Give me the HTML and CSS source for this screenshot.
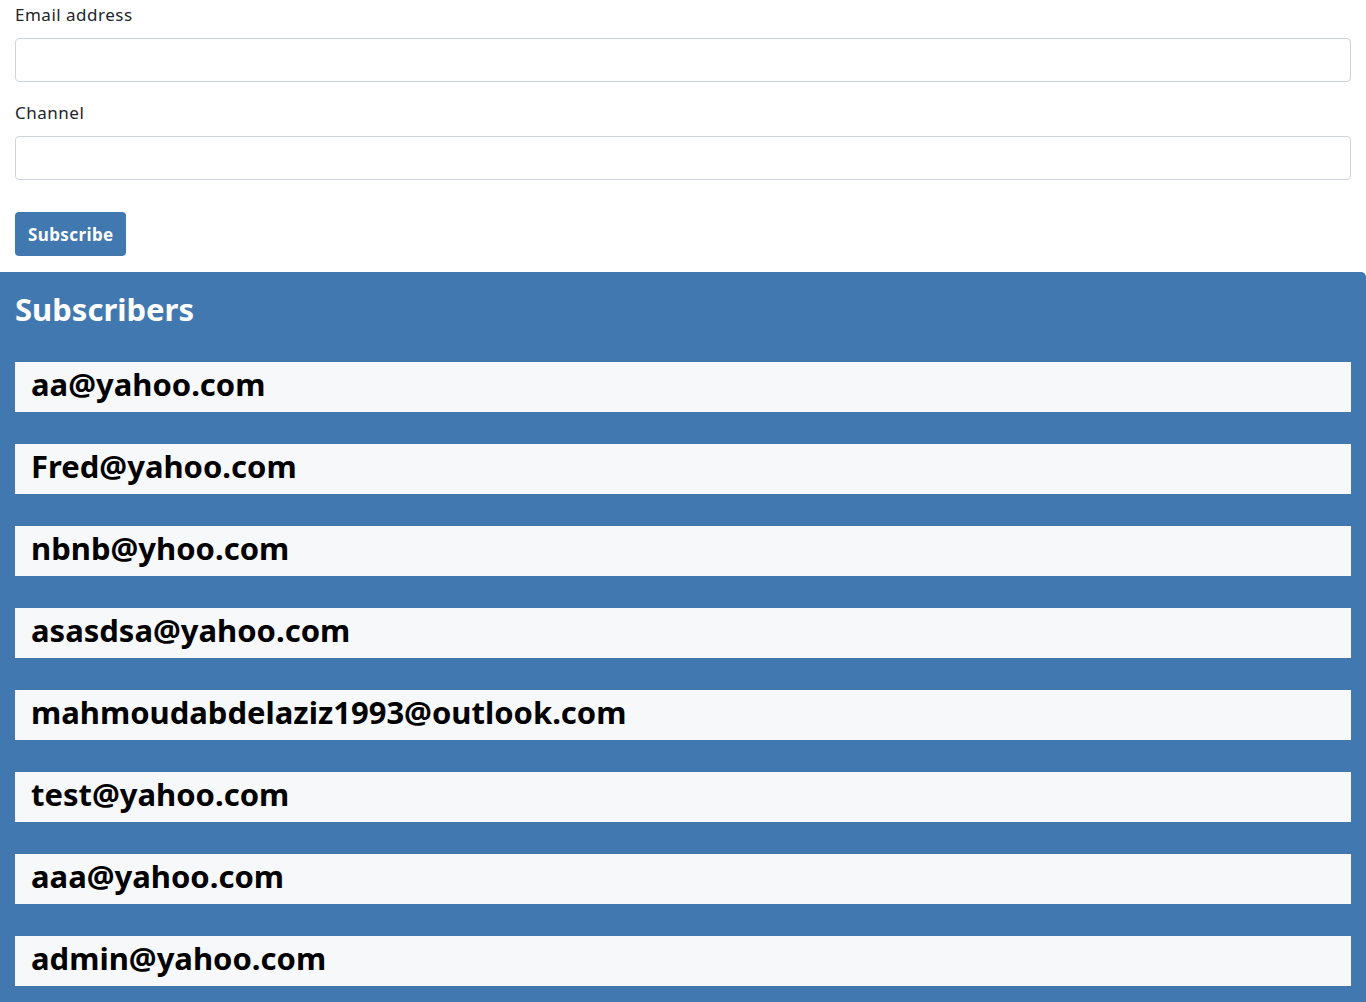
FILE: index.html
```html
<!DOCTYPE html>
<html>
<head>
<meta charset="utf-8">
<link rel="stylesheet" href="styles.css">
</head>
<body>
<form class="form">
  <label class="label">Email address</label>
  <input class="input" type="text">
  <label class="label label-second">Channel</label>
  <input class="input" type="text">
  <button class="btn" type="button">Subscribe</button>
</form>
<section class="panel">
  <h2 class="panel-title">Subscribers</h2>
  <ul class="list">
    <li class="item">aa@yahoo.com</li>
    <li class="item">Fred@yahoo.com</li>
    <li class="item">nbnb@yhoo.com</li>
    <li class="item">asasdsa@yahoo.com</li>
    <li class="item">mahmoudabdelaziz1993@outlook.com</li>
    <li class="item">test@yahoo.com</li>
    <li class="item">aaa@yahoo.com</li>
    <li class="item">admin@yahoo.com</li>
  </ul>
</section>
</body>
</html>
```
FILE: styles.css
```css
* { box-sizing: border-box; }
html, body { margin: 0; padding: 0; background: #fff; }
body {
  font-family: "Noto Sans", "Open Sans", sans-serif;
  color: #212529;
  font-size: 16px;
}
.form {
  display: flex;
  flex-direction: column;
  align-items: flex-start;
  padding: 3px 15px 0 15px;
}
.label {
  display: block;
  font-size: 17px;
  letter-spacing: 0.5px;
  line-height: 24px;
  margin-bottom: 11px;
}
.label-second { margin-top: 19px; }
.input {
  width: 100%;
  height: 44px;
  border: 1px solid #ced4da;
  border-radius: 4px;
  background: #fff;
  margin: 0;
}
.btn {
  margin-top: 32px;
  height: 44px;
  padding: 0 12px 0 13px;
  background: #4278b0;
  color: #fff;
  border: 0;
  border-radius: 4px;
  font-family: inherit;
  font-weight: 700;
  font-size: 17px;
  letter-spacing: 0.4px;
}
.panel {
  margin-top: 16px;
  background: #4278b0;
  border-radius: 0 5px 0 0;
  padding: 18px 15px 20px 15px;
}
.panel-title {
  margin: 0 0 34px 0;
  color: #fff;
  font-size: 31px;
  line-height: 38px;
  font-weight: 700;
}
.list {
  list-style: none;
  margin: 0;
  padding: 0;
  display: flex;
  flex-direction: column;
  gap: 32px;
}
.item {
  background: #f7f8fa;
  height: 50px;
  line-height: 45px;
  padding: 0 16px;
  color: #000;
  font-size: 31px;
  font-weight: 700;
}
```
